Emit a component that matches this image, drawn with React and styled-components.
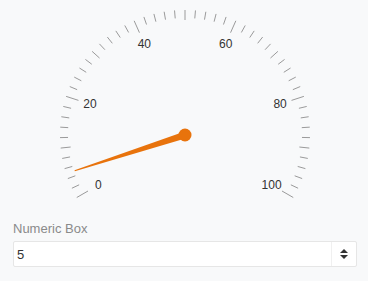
import React from "react";
import styled, { createGlobalStyle } from "styled-components";

const GlobalStyle = createGlobalStyle`
  body {
    margin: 0;
    background: #f8f9fa;
    font-family: "Liberation Sans", Arial, sans-serif;
  }
`;

const CX = 185;
const CY = 135;
const R = 125;
const MIN = 0;
const MAX = 100;

const angleOf = (v) => ((210 - ((v - MIN) / (MAX - MIN)) * 240) * Math.PI) / 180;
const pt = (a, r) => [CX + r * Math.cos(a), CY - r * Math.sin(a)];

const Gauge = ({ value }) => {
  const ticks = [];
  for (let v = MIN; v <= MAX; v += 2) {
    const a = angleOf(v);
    const len = v % 20 === 0 ? 13 : v % 10 === 0 ? 10 : 8;
    const [x1, y1] = pt(a, R);
    const [x2, y2] = pt(a, R - len);
    ticks.push(<line key={v} x1={x1} y1={y1} x2={x2} y2={y2} stroke="#9a9a9a" strokeWidth="1" />);
  }
  const labels = [0, 20, 40, 60, 80, 100].map((v) => {
    const [x, y] = pt(angleOf(v), 100);
    return (
      <text key={v} x={x} y={y + 4} textAnchor="middle" fontSize="12" fill="#333">
        {v}
      </text>
    );
  });
  const a = angleOf(value);
  const [tx, ty] = pt(a, 116);
  const px = Math.sin(a);
  const py = Math.cos(a);
  const needle = [
    [CX + px * 3.5, CY + py * 3.5],
    [tx + px * 0.5, ty + py * 0.5],
    [tx - px * 0.5, ty - py * 0.5],
    [CX - px * 3.5, CY - py * 3.5],
  ]
    .map((p) => p.join(","))
    .join(" ");

  return (
    <GaugeSvg width="368" height="221" viewBox="0 0 368 221">
      {ticks}
      <g fontFamily="'Liberation Sans', Arial, sans-serif">{labels}</g>
      <polygon points={needle} fill="#e8730c" />
      <circle cx={CX} cy={CY} r="6.5" fill="#e8730c" />
    </GaugeSvg>
  );
};

export default function App() {
  const value = 5;
  return (
    <>
      <GlobalStyle />
      <Page>
        <Gauge value={value} />
        <Field>
          <Label>Numeric Box</Label>
          <InputBox>
            <Value>{value}</Value>
            <Spinner>
              <Arrow $up />
              <Arrow />
            </Spinner>
          </InputBox>
        </Field>
      </Page>
    </>
  );
}

const Page = styled.div`
  width: 368px;
  height: 281px;
`;

const GaugeSvg = styled.svg`
  display: block;
`;

const Field = styled.div`
  padding: 0 11px 0 13px;
`;

const Label = styled.div`
  font-size: 13px;
  line-height: 16px;
  color: #8a8a8a;
  margin-bottom: 4px;
`;

const InputBox = styled.div`
  display: flex;
  height: 26px;
  box-sizing: border-box;
  background: #fff;
  border: 1px solid #e6e6e6;
  border-radius: 2px;
`;

const Value = styled.div`
  flex: 1;
  display: flex;
  align-items: center;
  padding-left: 3px;
  font-size: 13px;
  color: #333;
`;

const Spinner = styled.div`
  width: 24px;
  border-left: 1px solid #f0f0f0;
  display: flex;
  flex-direction: column;
  align-items: center;
  justify-content: center;
  gap: 2px;
`;

const Arrow = styled.div`
  width: 0;
  height: 0;
  border-left: 4px solid transparent;
  border-right: 4px solid transparent;
  ${(p) => (p.$up ? "border-bottom: 4px solid #333;" : "border-top: 4px solid #333;")}
`;
